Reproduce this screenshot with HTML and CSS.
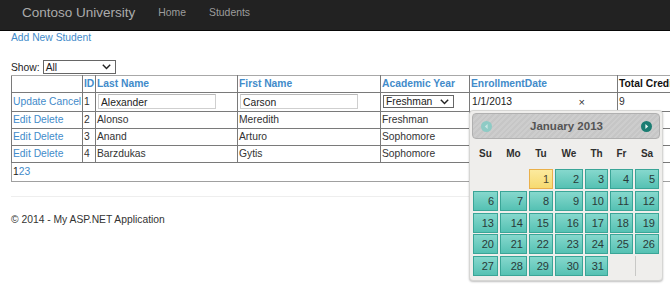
FILE: index.html
```html
<!DOCTYPE html>
<html lang="en">
<head>
<meta charset="utf-8">
<title>Students - Contoso University</title>
<link rel="stylesheet" href="styles.css">
</head>
<body>
<header class="navbar">
  <a class="brand" href="#">Contoso University</a>
  <nav class="nav">
    <a href="#">Home</a>
    <a href="#">Students</a>
  </nav>
</header>

<main class="container">
  <a class="link add-link" href="#">Add New Student</a>

  <div class="show-row">
    <span>Show:</span>
    <div class="fake-select show-select">
      <span>All</span>
      <svg class="chev" width="9" height="6" viewBox="0 0 9 6"><path d="M0.8 0.8 L4.5 4.6 L8.2 0.8" fill="none" stroke="#222" stroke-width="1.4"/></svg>
    </div>
  </div>

  <table class="grid">
    <colgroup>
      <col class="c-cmd"><col class="c-id"><col class="c-last"><col class="c-first"><col class="c-year"><col class="c-date"><col class="c-cred">
    </colgroup>
    <thead>
      <tr class="head-row">
        <th></th>
        <th><a class="link" href="#">ID</a></th>
        <th><a class="link" href="#">Last Name</a></th>
        <th><a class="link" href="#">First Name</a></th>
        <th><a class="link" href="#">Academic Year</a></th>
        <th><a class="link" href="#">EnrollmentDate</a></th>
        <th class="plain">Total Credits</th>
      </tr>
    </thead>
    <tbody>
      <tr class="edit-row">
        <td><a class="link" href="#">Update</a> <a class="link" href="#">Cancel</a></td>
        <td>1</td>
        <td><input class="txt" type="text" value="Alexander"></td>
        <td><input class="txt" type="text" value="Carson"></td>
        <td>
          <div class="fake-select year-select">
            <span>Freshman</span>
            <svg class="chev" width="9" height="6" viewBox="0 0 9 6"><path d="M0.8 0.8 L4.5 4.6 L8.2 0.8" fill="none" stroke="#222" stroke-width="1.4"/></svg>
          </div>
        </td>
        <td>
          <div class="date-input"><span>1/1/2013</span><span class="clear">×</span></div>
        </td>
        <td>9</td>
      </tr>
      <tr class="data-row">
        <td><a class="link" href="#">Edit</a> <a class="link" href="#">Delete</a></td>
        <td>2</td><td>Alonso</td><td>Meredith</td><td>Freshman</td><td></td><td></td>
      </tr>
      <tr class="data-row">
        <td><a class="link" href="#">Edit</a> <a class="link" href="#">Delete</a></td>
        <td>3</td><td>Anand</td><td>Arturo</td><td>Sophomore</td><td></td><td></td>
      </tr>
      <tr class="data-row">
        <td><a class="link" href="#">Edit</a> <a class="link" href="#">Delete</a></td>
        <td>4</td><td>Barzdukas</td><td>Gytis</td><td>Sophomore</td><td></td><td></td>
      </tr>
      <tr class="pager-row">
        <td colspan="7"><span class="pg-cur">1</span><a class="link" href="#">2</a><a class="link" href="#">3</a></td>
      </tr>
    </tbody>
  </table>

  <footer class="footer">
    <hr class="rule">
    <p>© 2014 - My ASP.NET Application</p>
  </footer>
</main>

<div class="datepicker">
  <div class="dp-header">
    <span class="dp-btn dp-prev"><svg width="11" height="11" viewBox="0 0 11 11"><circle cx="5.5" cy="5.5" r="5.5" fill="#8ecbc5"/><path d="M6.6 3 L3.8 5.5 L6.6 8 Z" fill="#c9e6e3"/></svg></span>
    <span class="dp-title">January 2013</span>
    <span class="dp-btn dp-next"><svg width="11" height="11" viewBox="0 0 11 11"><circle cx="5.5" cy="5.5" r="5.5" fill="#1b7d72"/><path d="M4.4 3 L7.2 5.5 L4.4 8 Z" fill="#e8f5f3"/></svg></span>
  </div>
  <div class="dp-week">
    <span>Su</span><span>Mo</span><span>Tu</span><span>We</span><span>Th</span><span>Fr</span><span>Sa</span>
  </div>
  <div class="dp-days">
    <span class="empty"></span><span class="empty"></span>
    <a class="day today" href="#">1</a><a class="day" href="#">2</a><a class="day" href="#">3</a><a class="day" href="#">4</a><a class="day" href="#">5</a>
    <a class="day" href="#">6</a><a class="day" href="#">7</a><a class="day" href="#">8</a><a class="day" href="#">9</a><a class="day" href="#">10</a><a class="day" href="#">11</a><a class="day" href="#">12</a>
    <a class="day" href="#">13</a><a class="day" href="#">14</a><a class="day" href="#">15</a><a class="day" href="#">16</a><a class="day" href="#">17</a><a class="day" href="#">18</a><a class="day" href="#">19</a>
    <a class="day" href="#">20</a><a class="day" href="#">21</a><a class="day" href="#">22</a><a class="day" href="#">23</a><a class="day" href="#">24</a><a class="day" href="#">25</a><a class="day" href="#">26</a>
    <a class="day" href="#">27</a><a class="day" href="#">28</a><a class="day" href="#">29</a><a class="day" href="#">30</a><a class="day" href="#">31</a>
    <span class="empty"></span><span class="empty last"></span>
  </div>
</div>
</body>
</html>
```

FILE: styles.css
```css
html, body {
  margin: 0;
  padding: 0;
  overflow: hidden;
}
body {
  font-family: "Liberation Sans", Arial, sans-serif;
  font-size: 10.3px;
  color: #333;
  background: #fff;
  position: relative;
  width: 670px;
  height: 286px;
}
a { text-decoration: none; }
.link { color: #428bca; }

.navbar {
  height: 30px;
  background: #222;
  border-bottom: 1px solid #080808;
  display: flex;
  align-items: center;
  padding-left: 22px;
}
.brand {
  color: #ababab;
  font-size: 13.5px;
  margin-top: -6px;
}
.nav {
  display: flex;
  gap: 23px;
  margin-left: 23px;
  margin-top: -6px;
}
.nav a {
  color: #9d9d9d;
  font-size: 10.4px;
}

.container {
  padding: 0 11px;
}
.add-link {
  display: block;
  line-height: 14px;
  width: max-content;
}

.show-row {
  margin-top: 15px;
  height: 14px;
  display: flex;
  align-items: center;
  gap: 3px;
  color: #222;
}
.fake-select {
  box-sizing: border-box;
  display: flex;
  align-items: center;
  justify-content: space-between;
  border: 1px solid #666;
  background: #fff;
  color: #222;
  padding: 0 4px 0 2px;
}
.show-select {
  width: 73px;
  height: 14px;
}
.year-select {
  width: 71px;
  height: 13px;
  margin: 0 0 0 1px;
}

.grid {
  margin-top: 1px;
  border-collapse: collapse;
  table-layout: fixed;
  width: 659px;
}
.c-cmd { width: 71px; }
.c-id { width: 13px; }
.c-last { width: 142px; }
.c-first { width: 143px; }
.c-year { width: 89px; }
.c-date { width: 148px; }
.c-cred { width: 53px; }
.grid th, .grid td {
  border: 1px solid #7a7a7a;
  padding: 0 1px;
  text-align: left;
  white-space: nowrap;
  overflow: hidden;
  line-height: 14px;
  color: #333;
}
.grid th:last-child, .grid td:last-child {
  border-right-color: transparent;
}
.grid thead th {
  border-top-color: #a8a8a8;
  font-weight: bold;
}
.grid th.plain { color: #111; }
.head-row { height: 17px; }
.edit-row { height: 18.5px; }
.data-row { height: 17.3px; }
.pager-row { height: 19px; }
.grid .pager-row td {
  border-right-color: #a0a0a0;
  border-bottom-color: #a0a0a0;
  border-left-color: #a0a0a0;
}
.pg-cur { color: #222; }

.txt {
  box-sizing: border-box;
  width: 118px;
  height: 15px;
  border: 1px solid #cfcfcf;
  border-top-color: #b8b8b8;
  font: inherit;
  color: #222;
  padding: 1px 2px 0;
  margin: 0 0 0 1px;
  display: block;
}
.date-input {
  box-sizing: border-box;
  width: 119px;
  height: 16px;
  display: flex;
  align-items: center;
  justify-content: space-between;
  padding: 0 5px 0 1px;
  color: #222;
  background: #fff;
}
.clear {
  font-size: 11px;
  color: #333;
}

.footer {
  margin-top: 14px;
}
.rule {
  border: 0;
  border-top: 1px solid #eee;
  margin: 0;
}
.footer p {
  margin: 16px 0 0;
  line-height: 14px;
}

/* datepicker */
.datepicker {
  position: absolute;
  left: 469px;
  top: 110px;
  width: 194px;
  height: 171px;
  box-sizing: border-box;
  padding: 2px;
  background: #efeeec;
  border: 1px solid #d6d6d4;
  border-radius: 4px;
  box-shadow: 0 1px 2px rgba(0,0,0,0.25);
}
.dp-header {
  box-sizing: border-box;
  height: 26px;
  display: flex;
  align-items: center;
  justify-content: space-between;
  padding: 0 7px 0 8px;
  border: 1px solid #b0b0b0;
  border-radius: 4px;
  background: repeating-linear-gradient(135deg, #cdcdcd 0 2px, #c6c6c6 2px 4px);
}
.dp-btn { display: flex; }
.dp-title {
  font-weight: bold;
  font-size: 11.5px;
  color: #555;
}
.dp-week, .dp-days {
  display: grid;
  grid-template-columns: 25px 27px 24px 28px 23px 23px 24px;
  column-gap: 2px;
  margin-left: 1px;
}
.dp-week {
  height: 28px;
  align-items: center;
  font-weight: bold;
  font-size: 10px;
  color: #2e2e2e;
  text-align: center;
}
.dp-days {
  margin-top: 2px;
  grid-auto-rows: 20px;
  row-gap: 1.75px;
}
.day {
  box-sizing: border-box;
  border: 1px solid #3aa597;
  background: linear-gradient(#86d8cd, #55c1b3);
  color: #2a3a38;
  text-align: right;
  padding-right: 3px;
  font-size: 11px;
  line-height: 18px;
}
.day.today {
  border-color: #eab04a;
  background: linear-gradient(#fcea9e, #f6da70);
  color: #4a4630;
}
.empty.last {
  border-left: 1px solid #c8c8c6;
}
```
